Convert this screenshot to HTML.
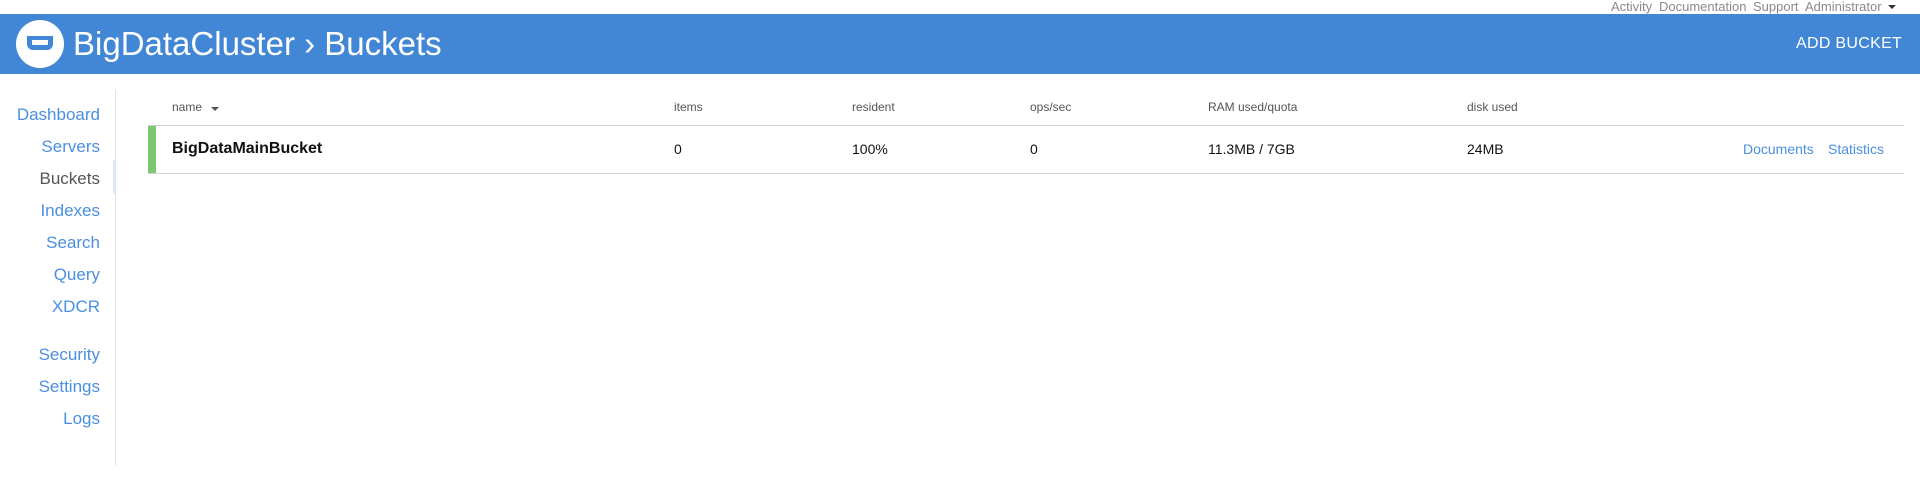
<!DOCTYPE html>
<html><head><style>
body{margin:0;width:1920px;height:485px;background:#fff;font-family:"Liberation Sans",sans-serif;position:relative;overflow:hidden}
.a{position:absolute;white-space:nowrap}
.top{top:-1px;font-size:13px;color:#8a8a8a}
.nav{right:1820px;font-size:17px;color:#4a8fe0;line-height:20px}
.h{top:100px;font-size:12px;color:#555}
.c{top:141px;font-size:14px;color:#111}
</style></head><body>
<div class="a top" style="left:1611px">Activity</div>
<div class="a top" style="left:1659px">Documentation</div>
<div class="a top" style="left:1753px">Support</div>
<div class="a top" style="left:1805px">Administrator</div>
<div class="a" style="left:1888px;top:5px;border-left:4px solid transparent;border-right:4px solid transparent;border-top:4px solid #333"></div>
<div class="a" style="left:0;top:14px;width:1920px;height:60px;background:#4287d6"></div>
<div class="a" style="left:16px;top:20px;width:48px;height:48px;border-radius:50%;background:#fff"></div>
<div class="a" style="left:27px;top:36px;width:26px;height:14px;border:5px solid #4287d6;border-top:none;border-radius:0 0 6px 6px;box-sizing:border-box"></div>
<div class="a" style="left:31px;top:36px;width:18px;height:4px;background:#4287d6"></div>
<div class="a" style="left:73px;top:23px;font-size:33px;color:#fff;line-height:42px">BigDataCluster › Buckets</div>
<div class="a" style="left:1796px;top:35px;font-size:16px;color:#fff;letter-spacing:0.3px">ADD BUCKET</div>
<div class="a" style="left:115px;top:90px;width:1px;height:376px;background:#e4e4e4"></div>
<div class="a" style="left:113px;top:160px;width:2px;height:34px;background:#dde8f5"></div>
<div class="a nav" style="top:105px">Dashboard</div>
<div class="a nav" style="top:137px">Servers</div>
<div class="a nav" style="top:169px;color:#555">Buckets</div>
<div class="a nav" style="top:201px">Indexes</div>
<div class="a nav" style="top:233px">Search</div>
<div class="a nav" style="top:265px">Query</div>
<div class="a nav" style="top:297px">XDCR</div>
<div class="a nav" style="top:345px">Security</div>
<div class="a nav" style="top:377px">Settings</div>
<div class="a nav" style="top:409px">Logs</div>
<div class="a h" style="left:172px">name</div>
<div class="a" style="left:211px;top:107px;border-left:4px solid transparent;border-right:4px solid transparent;border-top:4px solid #555"></div>
<div class="a h" style="left:674px">items</div>
<div class="a h" style="left:852px">resident</div>
<div class="a h" style="left:1030px">ops/sec</div>
<div class="a h" style="left:1208px">RAM used/quota</div>
<div class="a h" style="left:1467px">disk used</div>
<div class="a" style="left:148px;top:125px;width:1756px;height:1px;background:#d0d0d0"></div>
<div class="a" style="left:148px;top:173px;width:1756px;height:1px;background:#d0d0d0"></div>
<div class="a" style="left:148px;top:126px;width:8px;height:47px;background:#7dc672"></div>
<div class="a" style="left:172px;top:140px;font-size:16px;font-weight:bold;color:#111">BigDataMainBucket</div>
<div class="a c" style="left:674px">0</div>
<div class="a c" style="left:852px">100%</div>
<div class="a c" style="left:1030px">0</div>
<div class="a c" style="left:1208px">11.3MB / 7GB</div>
<div class="a c" style="left:1467px">24MB</div>
<div class="a c" style="left:1743px;color:#4a8fe0">Documents</div>
<div class="a c" style="left:1828px;color:#4a8fe0">Statistics</div>
</body></html>
